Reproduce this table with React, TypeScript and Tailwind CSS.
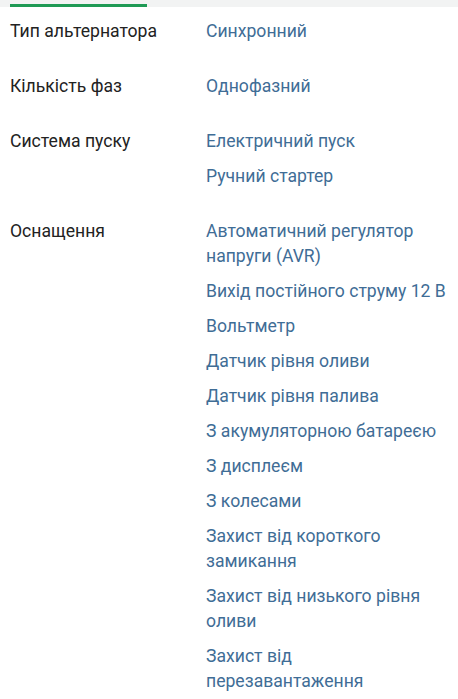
const specs = [
  { label: 'Тип альтернатора', values: ['Синхронний'] },
  { label: 'Кількість фаз', values: ['Однофазний'] },
  { label: 'Система пуску', values: ['Електричний пуск', 'Ручний стартер'] },
  {
    label: 'Оснащення',
    values: [
      'Автоматичний регулятор напруги (AVR)',
      'Вихід постійного струму 12 В',
      'Вольтметр',
      'Датчик рівня оливи',
      'Датчик рівня палива',
      'З акумуляторною батареєю',
      'З дисплеєм',
      'З колесами',
      'Захист від короткого замикання',
      'Захист від низького рівня оливи',
      'Захист від перезавантаження',
    ],
  },
]

export default function App() {
  return (
    <div className="min-h-screen bg-white font-['Roboto',sans-serif]">
      {/* tab strip */}
      <div className="h-[7px] bg-[#f2f3f3] pl-[10px] pt-[4px]">
        <div className="h-[3px] w-[137px] bg-[#1f9a55]" />
      </div>

      <div className="flex flex-col gap-[30px] pt-[12px]">
        {specs.map((row) => (
          <div key={row.label} className="grid grid-cols-[196px_244px] pl-[10px]">
            <span className="text-[17.6px] leading-[25px] text-[#222222]">{row.label}</span>
            <ul className="flex flex-col gap-[10px]">
              {row.values.map((v) => (
                <li key={v} className="text-[17.6px] leading-[25px] text-[#3f6d96]">
                  {v}
                </li>
              ))}
            </ul>
          </div>
        ))}
      </div>
    </div>
  )
}
